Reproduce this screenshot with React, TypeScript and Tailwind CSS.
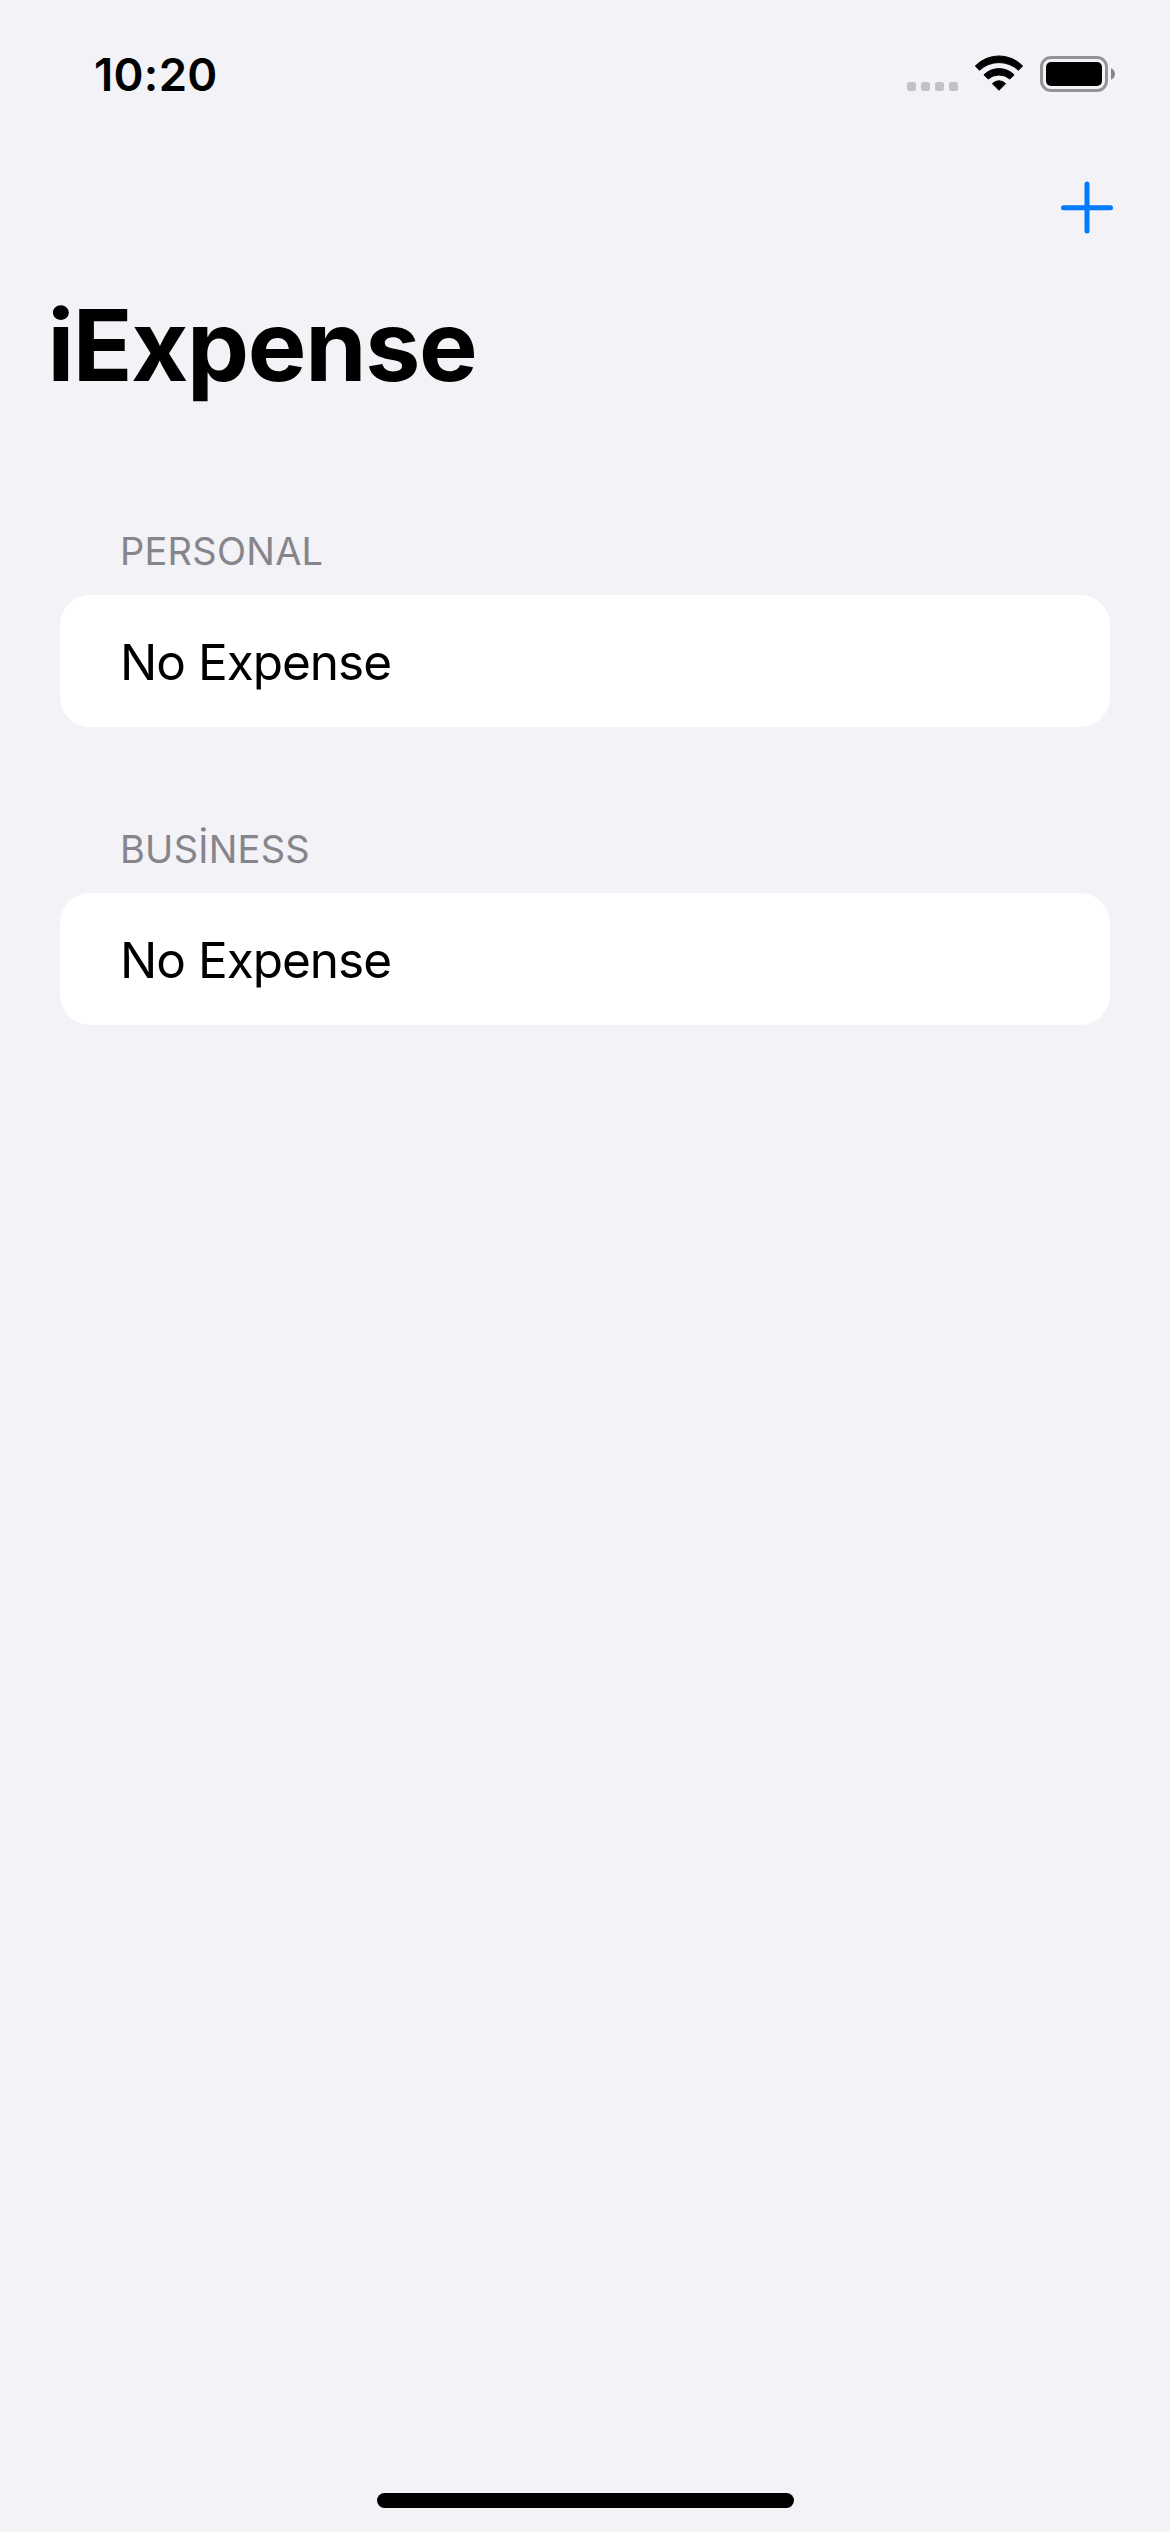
const sections = [
  { title: "PERSONAL", row: "No Expense" },
  { title: "BUSİNESS", row: "No Expense" },
];

function StatusBar() {
  return (
    <div className="flex h-[148px] items-start justify-between pt-[47px] pr-[55px] pl-[94px]">
      <span className="text-[45.5px] leading-[56px] font-semibold tracking-[0.3px] whitespace-nowrap">10:20</span>
      <div className="flex pt-[8px]">
        <div className="mt-[27px] flex gap-[5px]">
          <i className="size-[9px] rounded-[2.5px] bg-[#c2c1c7]" />
          <i className="size-[9px] rounded-[2.5px] bg-[#c2c1c7]" />
          <i className="size-[9px] rounded-[2.5px] bg-[#c2c1c7]" />
          <i className="size-[9px] rounded-[2.5px] bg-[#c2c1c7]" />
        </div>
        <svg className="ml-4 h-9 w-[50px]" viewBox="0 0 50 36" fill="#000" stroke="#000" strokeWidth="1" strokeLinejoin="round">
          <path d="M1.3 11A33 33 0 0 1 48.7 11L44.4 15.2A28.5 28.5 0 0 0 5.6 15.2Z" />
          <path d="M9.9 19.8A21.5 21.5 0 0 1 40.1 19.8L35.8 24A16.5 16.5 0 0 0 14.2 24Z" />
          <path d="M18.4 28.6A9.2 9.2 0 0 1 31.6 28.6L25 35.3Z" />
        </svg>
        <svg className="mt-px ml-4 h-9 w-[75px]" viewBox="0 0 75 36">
          <rect x="1.5" y="1.5" width="65" height="33" rx="9.5" fill="none" stroke="#949398" strokeWidth="3" />
          <rect x="6" y="6" width="56" height="24" rx="5" />
          <path d="M71 12.2C73.4 13.2 75 15.4 75 18S73.4 22.8 71 23.8Z" fill="#87868b" />
        </svg>
      </div>
    </div>
  );
}

export default function App() {
  return (
    <div className="flex h-[2532px] w-[1170px] flex-col bg-[#f2f2f7] font-['Inter',sans-serif] text-black">
      <StatusBar />
      <nav className="flex h-[120px] items-center justify-end pr-[56px]">
        <button aria-label="Add">
          <svg className="block size-[54px]" viewBox="0 0 54 54" stroke="#007aff" strokeWidth="5" strokeLinecap="round">
            <path d="M3.5 26.7H50.5M27 3V50" />
          </svg>
        </button>
      </nav>
      <h1 className="h-[154px] pl-[47.5px] text-[98.5px] leading-[156px] font-bold tracking-[-1.35px] whitespace-nowrap">iExpense</h1>
      <main className="flex flex-col gap-[96px] px-[60px] pt-[103px]">
        {sections.map((s) => (
          <section key={s.title}>
            <h2 className="h-[70px] pl-[60px] text-[38px] leading-[53px] tracking-[0.25px] text-[#86858b] whitespace-nowrap">{s.title}</h2>
            <div className="flex h-[132px] items-center rounded-[30px] bg-white pt-[2px] pl-[60px] text-[49.5px] leading-[66px] tracking-[-1px] whitespace-nowrap">
              {s.row}
            </div>
          </section>
        ))}
      </main>
      <div className="mx-auto mt-auto mb-[24px] h-[15px] w-[417px] rounded-full bg-black" />
    </div>
  );
}
